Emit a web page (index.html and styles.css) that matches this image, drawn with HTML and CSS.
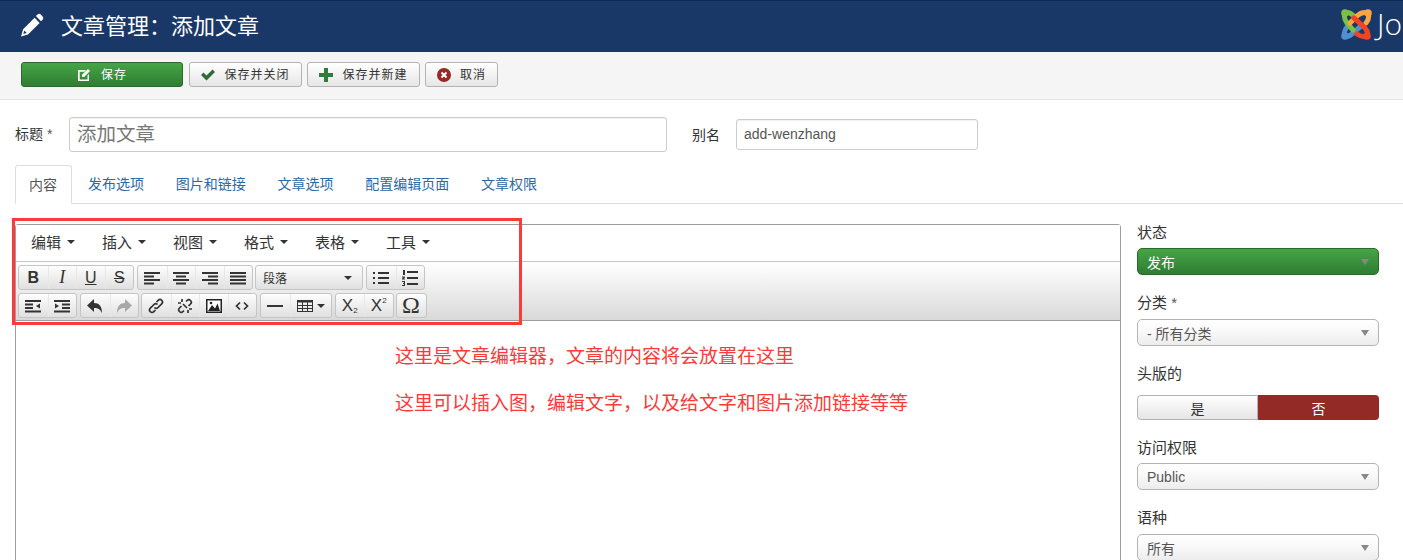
FILE: index.html
```html
<!DOCTYPE html>
<html lang="zh">
<head>
<meta charset="utf-8">
<title>文章管理</title>
<link rel="stylesheet" href="styles.css">
</head>
<body>
<header class="topbar">
  <svg class="pencil" viewBox="0 0 24 24" width="24" height="24"><path d="M17.500 1.500c1-.9 2.400-.8 3.300.1l1.800 1.900c.9.9.9 2.300 0 3.200l-1.700 1.600-5-5.200zM14.600 4.800l5 5.100L8 21.400 1 23.500l2.100-7.200zM4.300 17.500l-1 3.500 3.400-1.100z" fill="#fff" fill-rule="evenodd"/></svg>
  <h1 class="page-title">文章管理&#xFF1A;添加文章</h1>
  <div class="brand">
    <svg class="brand-mark" viewBox="0 0 32 33" width="32" height="33" fill="none" stroke-width="5" stroke-linecap="round">
      <path d="M21 18L13 25Q8 30 5 28Q3 24 7 19" stroke="#5091cd"/>
      <circle cx="5" cy="28" r="3.800" fill="#5091cd"/>
      <path d="M13 22L7 15Q3 9 5 5Q9 3 15 9" stroke="#7ac143"/>
      <circle cx="5" cy="5" r="3.800" fill="#7ac143"/>
      <path d="M10 15L17 8Q22 3 28 5Q30 10 26 15" stroke="#f9a541"/>
      <circle cx="28" cy="5" r="3.800" fill="#f9a541"/>
      <path d="M14 10L24 19Q29 24 27 28Q23 30 17 26" stroke="#f44321"/>
      <circle cx="27" cy="28" r="3.800" fill="#f44321"/>
    </svg>
    <span class="brand-name">Jo</span>
  </div>
</header>

<nav class="actions">
  <button class="act act-save">
    <svg class="act-ico" viewBox="0 0 14 14" width="14" height="14"><path d="M1 2h8L7.500 3.700H2.700v7.800h7.800V7.500L12 6v7H1z" fill="#fff"/><path d="M5 6.700L11 1l2 2-5.800 6H5z" fill="#fff"/></svg>保存</button>
  <button class="act act-close">
    <svg class="act-ico" viewBox="0 0 14 14" width="14" height="14"><path d="M0 7l2.500-2.500L5.500 7.500 11.500 1.500 14 4 5.500 12.500z" fill="#2f6b3a"/></svg>保存并关闭</button>
  <button class="act act-new">
    <svg class="act-ico" viewBox="0 0 14 14" width="14" height="14"><path d="M5 0h4v5h5v4H9v5H5V9H0V5h5z" fill="#2f7d3b"/></svg>保存并新建</button>
  <button class="act act-cancel">
    <svg class="act-ico" viewBox="0 0 14 14" width="14" height="14"><circle cx="7" cy="7" r="7" fill="#942a25"/><path d="M4.500 4.500l5 5M9.500 4.500l-5 5" stroke="#fff" stroke-width="2"/></svg>取消</button>
</nav>

<main class="page">
  <div class="title-row">
    <label class="lbl-title">标题 <span class="star">*</span></label>
    <div class="input-title">添加文章</div>
    <label class="lbl-alias">别名</label>
    <div class="input-alias">add-wenzhang</div>
  </div>

  <ul class="tabs">
    <li class="tab tab-on">内容</li>
    <li class="tab">发布选项</li>
    <li class="tab">图片和链接</li>
    <li class="tab">文章选项</li>
    <li class="tab">配置编辑页面</li>
    <li class="tab">文章权限</li>
  </ul>

  <div class="work">
    <section class="editor">
      <div class="menubar">
        <span class="menu">编辑<i class="caret"></i></span>
        <span class="menu">插入<i class="caret"></i></span>
        <span class="menu">视图<i class="caret"></i></span>
        <span class="menu">格式<i class="caret"></i></span>
        <span class="menu">表格<i class="caret"></i></span>
        <span class="menu">工具<i class="caret"></i></span>
      </div>
      <div class="toolbar">
        <div class="tool-row">
          <div class="group">
            <span class="tb t-b">B</span><span class="tb t-i">I</span><span class="tb t-u">U</span><span class="tb t-s">S</span>
          </div>
          <div class="group">
            <span class="tb"><svg class="ic" viewBox="0 0 16 14"><path d="M0 1h16v2H0zM0 4.500h10v2H0zM0 8h16v2H0zM0 11.500h10v2H0z"/></svg></span>
            <span class="tb"><svg class="ic" viewBox="0 0 16 14"><path d="M0 1h16v2H0zM3 4.500h10v2H3zM0 8h16v2H0zM3 11.500h10v2H3z"/></svg></span>
            <span class="tb"><svg class="ic" viewBox="0 0 16 14"><path d="M0 1h16v2H0zM6 4.500h10v2H6zM0 8h16v2H0zM6 11.500h10v2H6z"/></svg></span>
            <span class="tb"><svg class="ic" viewBox="0 0 16 14"><path d="M0 1h16v2H0zM0 4.500h16v2H0zM0 8h16v2H0zM0 11.500h16v2H0z"/></svg></span>
          </div>
          <div class="group para"><span>段落</span><i class="caret"></i></div>
          <div class="group">
            <span class="tb"><svg class="ic" viewBox="0 0 16 16"><path d="M0 2h2v2H0zM5 2h11v2H5zM0 7h2v2H0zM5 7h11v2H5zM0 12h2v2H0zM5 12h11v2H5z"/></svg></span>
            <span class="tb"><svg class="ic" viewBox="0 0 16 16"><path d="M5 1h11v2H5zM5 7h11v2H5zM5 13h11v2H5zM1 0h2v5H1zM0 6.500h3v1l-1.500 1H3v1H0v-1l1.500-1H0zM0 11h3v5H0v-1h2v-1H1v-1h1v-1H0z"/></svg></span>
          </div>
        </div>
        <div class="tool-row">
          <div class="group">
            <span class="tb"><svg class="ic" viewBox="0 0 16 14"><path d="M0 1h16v2H0zM0 4.500h8v2H0zM0 8h8v2H0zM0 11.500h16v2H0zM15 4.500v5l-4-2.500z"/></svg></span>
            <span class="tb"><svg class="ic" viewBox="0 0 16 14"><path d="M0 1h16v2H0zM8 4.500h8v2H8zM8 8h8v2H8zM0 11.500h16v2H0zM1 4.500v5l4-2.500z"/></svg></span>
          </div>
          <div class="group">
            <span class="tb"><svg class="ic" viewBox="0 0 16 16"><path d="M7 1v4c5 0 8 3 8 10-2-4-4-5-8-5v4L0 7.500z"/></svg></span>
            <span class="tb tb-off"><svg class="ic" viewBox="0 0 16 16"><path d="M9 1v4C4 5 1 8 1 15c2-4 4-5 8-5v4l7-6.500z"/></svg></span>
          </div>
          <div class="group tight">
            <span class="tb"><svg class="ic ic-line" viewBox="0 0 16 16"><path d="M6.500 9.500c1 1 2.500 1 3.500 0l3.700-3.700c1-1 1-2.500 0-3.500s-2.500-1-3.500 0L8.500 4M9.500 6.500c-1-1-2.500-1-3.500 0L2.300 10.200c-1 1-1 2.500 0 3.500s2.500 1 3.500 0L7.500 12"/></svg></span>
            <span class="tb"><svg class="ic ic-line" viewBox="0 0 16 16"><path d="M9 3.500l1-1c1-1 2.500-1 3.500 0s1 2.500 0 3.500l-2 2M7 12.500l-1 1c-1 1-2.500 1-3.500 0s-1-2.500 0-3.500l2-2M5 1v3M1 5h3M11 15v-3M15 11h-3M6 6l4 4"/></svg></span>
            <span class="tb"><svg class="ic" viewBox="0 0 16 14"><path d="M0 0h16v14H0z" fill="#222"/><path d="M1.500 1.500h13v11h-13z" fill="#fff"/><path d="M2 12l4-6 3 3.500 2.500-5L14 12z" fill="#222"/><circle cx="5" cy="4" r="1.300" fill="#222"/></svg></span>
            <span class="tb"><svg class="ic ic-line" viewBox="0 0 16 16"><path d="M6 4.500L2.500 8 6 11.500M10 4.500L13.500 8 10 11.500"/></svg></span>
          </div>
          <div class="group">
            <span class="tb"><svg class="ic" viewBox="0 0 16 14"><path d="M0 6h16v2H0z"/></svg></span>
            <span class="tb tb-wide"><svg class="ic" viewBox="0 0 16 14"><path d="M0 1h16v12H0zM1 3.500v2.500h4V3.500zM6 3.500v2.500h4V3.500zM11 3.500v2.500h4V3.500zM1 7v2h4V7zM6 7v2h4V7zM11 7v2h4V7zM1 10v2h4v-2zM6 10v2h4v-2zM11 10v2h4v-2z" fill-rule="evenodd"/></svg><i class="caret"></i></span>
          </div>
          <div class="group">
            <span class="tb t-sub">X<sub>2</sub></span><span class="tb t-sub">X<sup>2</sup></span>
          </div>
          <div class="group tight">
            <span class="tb t-omega">Ω</span>
          </div>
        </div>
      </div>
      <div class="content">
        <p class="note">这里是文章编辑器&#xFF0C;文章的内容将会放置在这里</p>
        <p class="note">这里可以插入图&#xFF0C;编辑文字&#xFF0C;以及给文字和图片添加链接等等</p>
      </div>
    </section>

    <aside class="side">
      <label class="f-lbl f-lbl-first">状态</label>
      <div class="sel sel-green"><span>发布</span><i class="tri"></i></div>
      <label class="f-lbl">分类 <span class="star">*</span></label>
      <div class="sel"><span>- 所有分类</span><i class="tri"></i></div>
      <label class="f-lbl f-lbl-far">头版的</label>
      <div class="toggle"><span class="yes">是</span><span class="no">否</span></div>
      <label class="f-lbl f-lbl-near">访问权限</label>
      <div class="sel"><span>Public</span><i class="tri"></i></div>
      <label class="f-lbl">语种</label>
      <div class="sel"><span>所有</span><i class="tri"></i></div>
    </aside>
  </div>

  <div class="callout"></div>
</main>
</body>
</html>
```
FILE: styles.css
```css
* { box-sizing: border-box; }
html, body { margin: 0; height: 560px; overflow: hidden; }
body {
  position: relative;
  background: #fff;
  color: #333;
  font-family: "Liberation Sans", "Noto Sans CJK SC", sans-serif;
  font-size: 14px;
}

.topbar {
  height: 52px;
  background: #1a3867;
  border-top: 1px solid #0c2a55;
  display: flex;
  align-items: center;
  padding-left: 20px;
  overflow: hidden;
}
.pencil { flex: none; margin-bottom: 4px; }
.page-title {
  margin: 0 0 0 17px;
  font-size: 22px;
  font-weight: 400;
  color: #fff;
  line-height: 50px;
}
.brand { margin-left: auto; margin-right: 0; display: flex; align-items: center; gap: 5px; width: 63px; flex: none; margin-bottom: 5px; overflow: hidden; }
.brand-mark { flex: none; }
.brand-name { color: #fff; font-size: 30px; line-height: 34px; white-space: nowrap; font-family: "Open Sans", sans-serif; font-weight: 300; }

.actions {
  height: 48px;
  background: #f5f5f5;
  border-bottom: 1px solid #e3e3e3;
  padding: 10px 0 0 21px;
  display: flex;
  gap: 5px;
  align-items: flex-start;
}
.act {
  height: 25px;
  padding: 1px 0 0;
  border: 1px solid #b3b3b3;
  border-radius: 3px;
  background: linear-gradient(#fff, #e6e6e6);
  color: #333;
  font: 12px/22px "Liberation Sans", "Noto Sans CJK SC", sans-serif;
  letter-spacing: 1px;
  display: flex;
  align-items: center;
  justify-content: center;
  gap: 9px;
}
.act-ico { flex: none; }
.act-save { width: 162px; background: linear-gradient(#46a546, #2f7d32); border-color: #2a6a2d; color: #fff; gap: 10px; }
.act-close { width: 113px; margin-left: 1px; }
.act-new { width: 113px; }
.act-cancel { width: 73px; }

.page { padding: 0 24px 0 15px; position: relative; }

.title-row { display: flex; align-items: center; padding-top: 17px; height: 52px; }
.lbl-title { width: 54px; flex: none; font-size: 14px; color: #333; margin-bottom: 3px; }
.star { color: #555; }
.input-title {
  width: 598px; height: 35px; flex: none;
  border: 1px solid #ccc; border-radius: 3px;
  padding-left: 7px;
  font-size: 19.500px; line-height: 32px; color: #777;
  box-shadow: inset 0 1px 1px rgba(0,0,0,.06);
}
.lbl-alias { margin-left: 25px; width: 44px; flex: none; font-size: 14px; margin-bottom: 2px; }
.input-alias {
  width: 242px; height: 31px; flex: none;
  border: 1px solid #ccc; border-radius: 3px;
  padding-left: 7px;
  font-size: 14px; line-height: 28px; color: #555;
  box-shadow: inset 0 1px 1px rgba(0,0,0,.06);
}

.tabs {
  list-style: none; margin: 13px -24px 0 0; padding: 0;
  height: 39px;
  display: flex;
  border-bottom: 1px solid #ddd;
}
.tab { padding: 0 15.900px; height: 39px; line-height: 38px; font-size: 14px; color: #2a69a6; white-space: nowrap; }
.tab-on {
  color: #555;
  background: #fff;
  border: 1px solid #ddd;
  border-bottom-color: #fff;
  border-radius: 3px 3px 0 0;
  padding: 0 13px;
  width: 57px;
}

.work { display: flex; gap: 16px; margin-top: 20px; align-items: flex-start; }

.editor {
  width: 1106px; height: 400px; flex: none;
  border: 1px solid #9e9e9e;
  border-radius: 3px 3px 0 0;
}
.menubar { height: 37px; display: flex; padding: 0 0 3px 15px; gap: 27px; align-items: center; background: #fff; border-bottom: 1px solid #c5c5c5; }
.menu { font-size: 15px; color: #333; display: flex; align-items: center; gap: 6px; }
.caret { width: 0; height: 0; border: 4px solid transparent; border-top-color: #333; border-bottom: 0; display: inline-block; flex: none; }

.toolbar {
  height: 59px;
  padding: 3px 0 0 2px;
  background: linear-gradient(#fff, #d9d9d9);
  border-bottom: 1px solid #9e9e9e;
  display: flex; flex-direction: column; gap: 3px;
}
.tool-row { display: flex; gap: 3px; height: 25px; }
.group {
  display: flex; height: 25px;
  border: 1px solid #c5c5c5; border-radius: 3px;
  background: linear-gradient(#fdfdfd, #e0e0e0);
}
.tight { margin-left: -1px; }
.tb {
  width: 28.500px; height: 23px;
  display: flex; align-items: center; justify-content: center;
  color: #333; font-size: 16px;
  border-left: 1px solid #e8e8e8;
}
.tb:first-child { border-left: 0; }
.ic { width: 16px; height: 16px; fill: #333; display: block; }
.ic-line { fill: none; stroke: #333; stroke-width: 1.700; }
.t-b { font-weight: 700; }
.t-i { font-family: "Liberation Serif", serif; font-style: italic; font-size: 18px; font-weight: 400; }
.t-u { text-decoration: underline; }
.t-s { text-decoration: line-through; font-weight: 400; }
.tb-off .ic { fill: #a8a8a8; }
.tb-wide { width: 41px; gap: 4px; }
.para { width: 108px; margin-left: -1px; align-items: center; justify-content: space-between; padding: 0 10px 0 7px; font-size: 12px; }
.t-sub { font-size: 17px; font-family: "Liberation Sans", sans-serif; line-height: 1; }
.t-sub sub, .t-sub sup { font-size: 8px; line-height: 1; vertical-align: baseline; }
.t-sub sub { margin-top: 11px; }
.t-sub sup { margin-bottom: 9px; }
.t-omega { width: 29px; font-size: 24px; font-family: "Liberation Serif", serif; }

.content { padding: 23px 0 0 379px; background: #fff; }
.note { margin: 0 0 21px; font-size: 19px; line-height: 26px; color: #fb3a3a; white-space: nowrap; }

.side { width: 242px; flex: none; margin-top: -1px; }
.f-lbl { display: block; font-size: 15px; line-height: 18px; color: #333; margin: 0 0 7px; }
.f-lbl-first { margin: 1px 0 6px; }
.f-lbl-far { margin-bottom: 12px; }
.f-lbl-near { margin-bottom: 6px; }
.sel {
  height: 27px; margin-bottom: 19px;
  border: 1px solid #b3b3b3; border-radius: 5px;
  background: linear-gradient(#fff 0, #f9f9f9 45%, #ececec 100%);
  display: flex; align-items: center; justify-content: space-between;
  padding: 0 9px;
  font-size: 14px; color: #555;
}
.sel-green { background: linear-gradient(#46a546, #2f7d32); border-color: #2a6a2d; color: #fff; }
.tri { width: 0; height: 0; border: 4px solid transparent; border-top: 6px solid #888; border-bottom: 0; flex: none; }
.toggle { height: 25px; margin-bottom: 19px; display: flex; font-size: 14px; }
.yes, .no { display: flex; align-items: center; justify-content: center; }
.yes { width: 121px; flex: none; border: 1px solid #b3b3b3; border-radius: 4px 0 0 4px; background: linear-gradient(#fff, #e6e6e6); color: #333; }
.no { flex: 1; background: #942a25; color: #fff; border-radius: 0 4px 4px 0; }

.callout {
  position: absolute; left: 12px; top: 118px;
  width: 510px; height: 107px;
  border: 3px solid #fb3a3a;
  pointer-events: none;
}
```
